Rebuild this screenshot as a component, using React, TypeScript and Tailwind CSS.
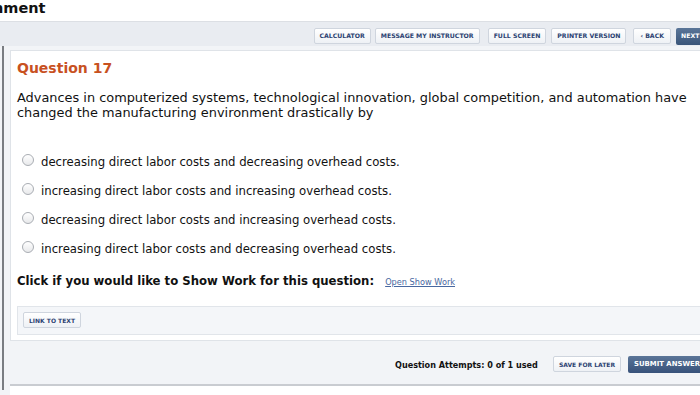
import React from "react";

const Btn = ({ children, className = "" }: { children: React.ReactNode; className?: string }) => (
  <div
    className={
      "h-[16px] px-[5px] flex items-center rounded-[2px] border border-[#cfd5de] bg-gradient-to-b from-white to-[#eef1f5] text-[6.2px] font-bold text-[#2c4272] whitespace-nowrap " +
      className
    }
  >
    {children}
  </div>
);

const options = [
  "decreasing direct labor costs and decreasing overhead costs.",
  "increasing direct labor costs and increasing overhead costs.",
  "decreasing direct labor costs and increasing overhead costs.",
  "increasing direct labor costs and decreasing overhead costs.",
];

export default function App() {
  return (
    <div
      className="w-[700px] h-[395px] overflow-hidden bg-white flex flex-col"
      style={{ fontFamily: '"DejaVu Sans", Verdana, sans-serif' }}
    >
      <div className="h-[22px] shrink-0 border-b border-[#dcdfe4] flex items-start overflow-hidden">
        <div className="ml-[-7px] mt-[-1px] text-[14.5px] font-bold text-[#111] leading-[18px]">nment</div>
      </div>
      <div className="h-[24px] shrink-0 bg-[#e9ecf1] flex items-center justify-end gap-[4px] pt-[4px]">
        <Btn>CALCULATOR</Btn>
        <Btn className="px-[3px]">MESSAGE MY INSTRUCTOR</Btn>
        <Btn className="ml-[4px]">FULL SCREEN</Btn>
        <Btn className="ml-[1px]">PRINTER VERSION</Btn>
        <Btn className="ml-[3px] px-[6px]">‹ BACK</Btn>
        <div className="h-[17px] w-[24px] ml-[1px] flex items-center pl-[5px] rounded-l-[2px] bg-gradient-to-b from-[#5a7598] to-[#3a5579] text-[6.2px] font-bold text-white">
          NEXT
        </div>
      </div>
      <div className="flex-1 flex bg-[#f2f4f7]">
        <div className="w-[2px] shrink-0 bg-[#f2f4f7]" />
        <div className="w-[2px] shrink-0 bg-[#7a7d82] mb-[5px]" />
        <div className="flex-1 flex flex-col pl-[6px] pt-[4px]">
          <div className="bg-white border border-[#dfe3e8] border-r-0 pl-[6px] pt-[8px] h-[291px]">
            <div className="text-[14px] font-bold text-[#c8511f] leading-[18px]">Question 17</div>
            <div className="mt-[13px] text-[12.9px] leading-[15px] text-[#111]">
              Advances in computerized systems, technological innovation, global competition, and automation have
              changed the manufacturing environment drastically by
            </div>
            <div className="mt-[34px] flex flex-col gap-[13px]">
              {options.map((o) => (
                <div key={o} className="flex items-center h-[16px]">
                  <div className="ml-[5px] w-[12px] h-[12px] rounded-full border border-[#a9adb3] bg-gradient-to-b from-white to-[#e8e9eb] mt-[-5px]" />
                  <div className="ml-[7px] text-[11.7px] text-[#111] leading-[16px]">{o}</div>
                </div>
              ))}
            </div>
            <div className="mt-[16px] flex items-baseline">
              <div className="text-[11.7px] font-bold text-[#111]">Click if you would like to Show Work for this question:</div>
              <div className="ml-[11px] text-[8.2px] text-[#4868a0] underline">Open Show Work</div>
            </div>
            <div className="mt-[15px] h-[29px] bg-[#f4f6f9] border border-[#e1e5ea] border-r-0 flex items-center pl-[5px]">
              <Btn className="h-[14px] px-[4px] text-[6px]">LINK TO TEXT</Btn>
            </div>
          </div>
          <div className="mt-[3px] h-[40px] flex items-center justify-end">
            <div className="text-[8.1px] font-bold text-[#111] mr-[15px] mt-[2px]">Question Attempts: 0 of 1 used</div>
            <Btn className="h-[16px] px-[4px] text-[6px]">SAVE FOR LATER</Btn>
            <div className="ml-[7px] h-[17px] w-[72px] flex items-center pl-[6px] rounded-l-[2px] bg-gradient-to-b from-[#5a7598] to-[#38527a] text-[6.9px] font-bold text-white whitespace-nowrap overflow-hidden">
              SUBMIT ANSWER
            </div>
          </div>
          <div className="h-[2px] bg-[#c9ccd1]" />
          <div className="flex-1 bg-white" />
        </div>
      </div>
    </div>
  );
}
